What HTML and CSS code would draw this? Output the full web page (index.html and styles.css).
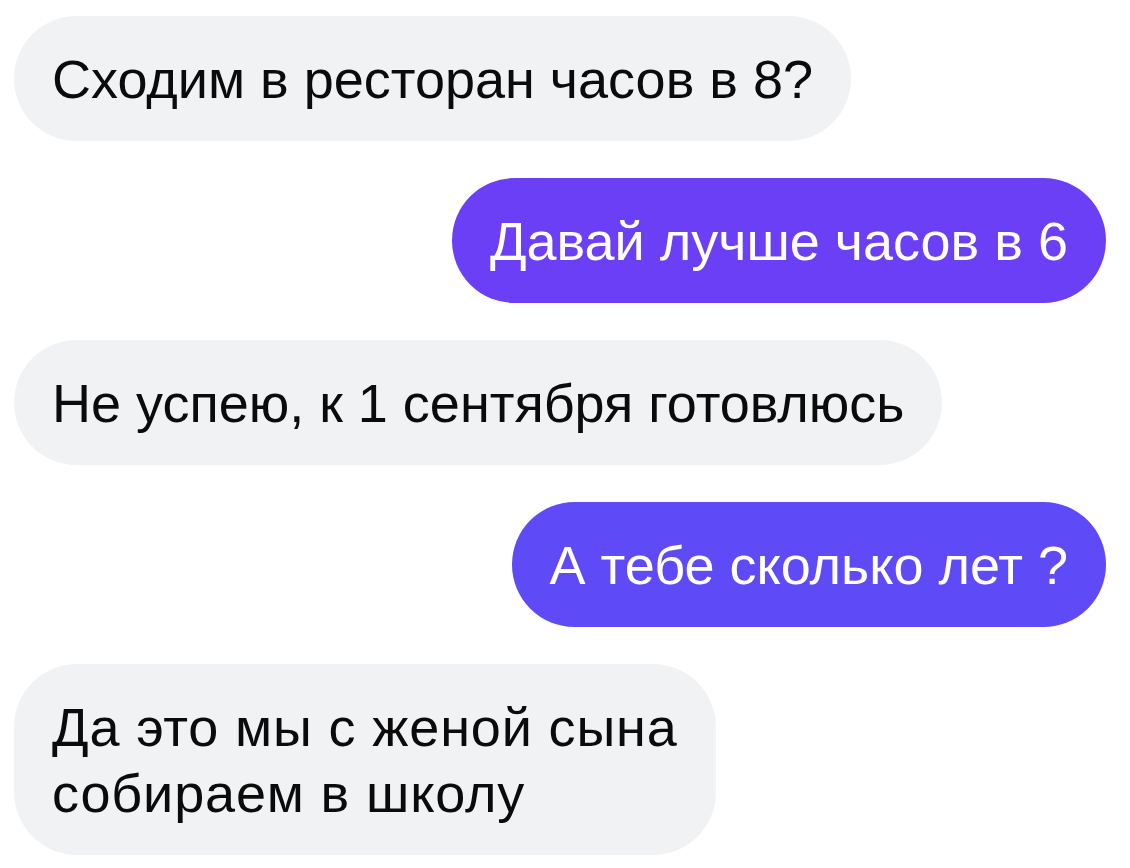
FILE: index.html
```html
<!DOCTYPE html>
<html>
<head>
    <meta charset="utf-8">
    <title>Чат</title>
    <link rel="stylesheet" href="styles.css">
</head>
<body>
    <div class="chat">
        <div class="msg in">Сходим в ресторан часов в 8?</div>
        <div class="msg out out-1">Давай лучше часов в 6</div>
        <div class="msg in">Не успею, к 1 сентября готовлюсь</div>
        <div class="msg out out-2">А тебе сколько лет ?</div>
        <div class="msg in wide">Да это мы с женой сына<br>собираем в школу</div>
    </div>
</body>
</html>
```

FILE: styles.css
```css
body {
    margin: 0;
    background-color: #ffffff;
    font-family: "Liberation Sans", Arial, sans-serif;
}

.chat {
    display: flex;
    flex-direction: column;
    gap: 37px;
    padding: 16px 24px 0 14px;
}

.msg {
    font-size: 54px;
    line-height: 66px;
    padding: 30px 38px 29px 38px;
    border-radius: 63px;
    white-space: nowrap;
}

.in {
    align-self: flex-start;
    background-color: #f1f2f4;
    color: #0b0b0b;
}

.wide {
    letter-spacing: 0.85px;
}

.out {
    align-self: flex-end;
    color: #ffffff;
}

.out-1 {
    background-color: #6b3ff6;
}

.out-2 {
    background-color: #5e4af6;
}
```
